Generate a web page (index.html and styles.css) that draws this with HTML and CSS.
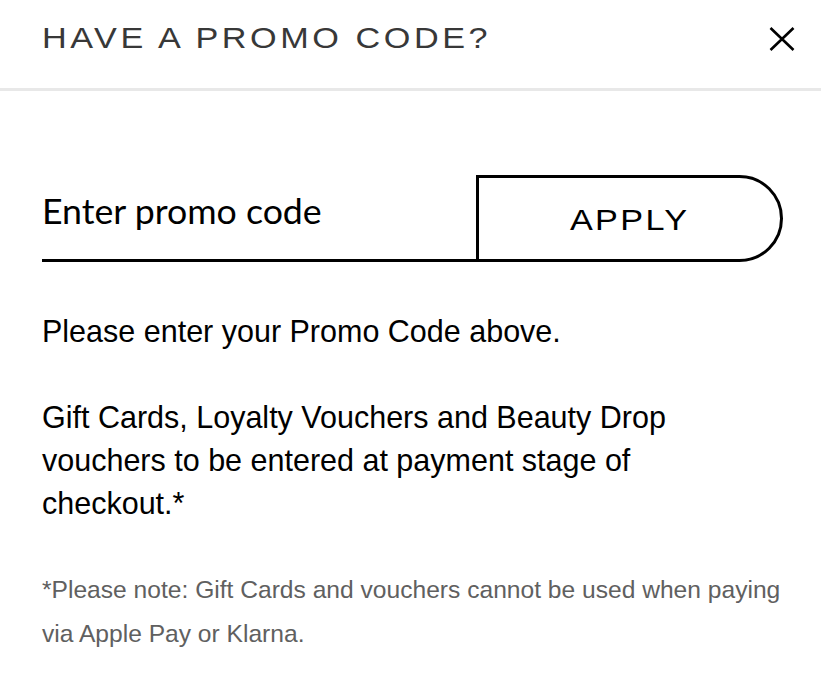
FILE: index.html
```html
<!DOCTYPE html>
<html lang="en">
<head>
<meta charset="UTF-8">
<meta name="viewport" content="width=device-width, initial-scale=1.0">
<title>Have a promo code?</title>
<link rel="stylesheet" href="styles.css">
</head>
<body>
  <header class="promo-header">
    <h2 class="promo-title"><span>HAVE A PROMO CODE?</span></h2>
    <button class="close-btn" type="button" aria-label="Close">
      <svg width="26" height="24" viewBox="0 0 26 24">
        <path d="M1.5 1 L24.5 23 M24.5 1 L1.5 23" stroke="#000" stroke-width="2.6" fill="none"/>
      </svg>
    </button>
  </header>

  <section class="promo-body">
    <!-- Promo code entry -->
    <form class="promo-form">
      <input type="text" class="promo-input" placeholder="Enter promo code">
      <button type="submit" class="apply-btn"><span>APPLY</span></button>
    </form>

    <p class="promo-text">Please enter your Promo Code above.</p>
    <p class="promo-text">Gift Cards, Loyalty Vouchers and Beauty Drop vouchers to be entered at payment stage of checkout.*</p>
    <p class="promo-note">*Please note: Gift Cards and vouchers cannot be used when paying via Apple Pay or Klarna.</p>
  </section>
</body>
</html>
```

FILE: styles.css
```css
body { margin: 0; padding: 0; background: #fff; font-family: "Liberation Sans", Arial, sans-serif; color: #000; }
.promo-header { display: flex; justify-content: space-between; align-items: flex-start; height: 88px; padding: 0 26px 0 42px; border-bottom: 3px solid #e8e8e8; }
.promo-title { margin: 22px 0 0; font-size: 29px; font-weight: normal; line-height: 32px; color: #383838; letter-spacing: 3px; }
.promo-title span { display: inline-block; transform: scaleX(1.18); transform-origin: left center; }
.close-btn { margin-top: 27px; padding: 0; border: none; background: none; width: 26px; height: 24px; cursor: pointer; }
.close-btn svg { display: block; }
.promo-body { padding: 0 38px 0 42px; }
.promo-form { display: flex; margin-top: 84px; }
.promo-input { flex: 1; min-width: 0; height: 70px; padding: 0 0 14px; border: none; border-bottom: 3px solid #000; font-family: Lato, "Open Sans", sans-serif; font-size: 35.7px; color: #000; outline: none; box-sizing: content-box; }
.promo-input::placeholder { color: #000; opacity: 1; }
.apply-btn { width: 307px; height: 87px; padding: 4px 0 0; border: 3px solid #000; border-radius: 0 44px 44px 0; background: #fff; font-family: "Liberation Sans", Arial, sans-serif; font-size: 29px; color: #000; letter-spacing: 2px; cursor: pointer; box-sizing: border-box; }
.apply-btn span { display: inline-block; transform: scaleX(1.18); }
.promo-text { max-width: 700px; margin: 0 0 43px; font-size: 30.5px; line-height: 43px; }
.promo-form + .promo-text { margin-top: 48px; }
.promo-note { margin: 41px 0 0; font-size: 24.6px; line-height: 44px; color: #606060; }
.promo-text + .promo-note { margin-top: 2px; }
```
